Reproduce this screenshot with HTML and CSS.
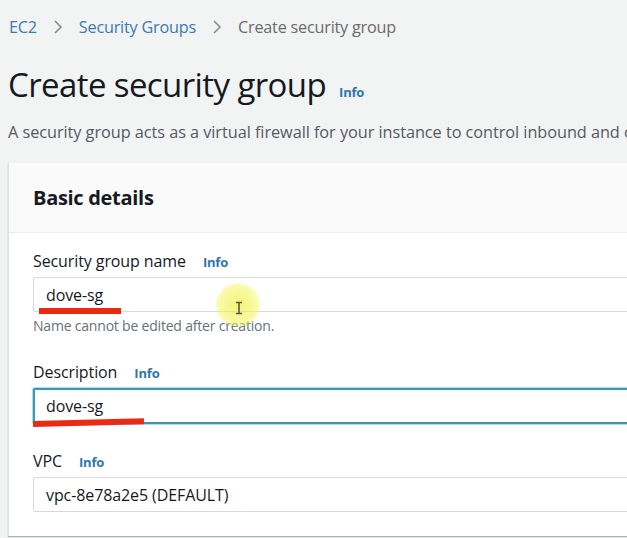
FILE: index.html
```html
<!DOCTYPE html>
<html>
<head>
<meta charset="utf-8">
<link rel="stylesheet" href="styles.css">
</head>
<body>
<div class="page">
  <nav class="crumbs">
    <a class="crumb-link">EC2</a>
    <svg class="chev" width="10" height="16" viewBox="0 0 10 16"><path d="M2 2 L8 8 L2 14" fill="none" stroke="#8c8c8c" stroke-width="1.6"/></svg>
    <a class="crumb-link">Security Groups</a>
    <svg class="chev" width="10" height="16" viewBox="0 0 10 16"><path d="M2 2 L8 8 L2 14" fill="none" stroke="#8c8c8c" stroke-width="1.6"/></svg>
    <span class="crumb-current">Create security group</span>
  </nav>
  <div class="title-row">
    <h1 class="title">Create security group</h1>
    <span class="info info-title">Info</span>
  </div>
  <p class="desc">A security group acts as a virtual firewall for your instance to control inbound and outbound traffic.</p>

  <section class="card">
    <header class="card-head">
      <h2 class="card-title">Basic details</h2>
    </header>
    <div class="card-body">
      <div class="field">
        <div class="label-row"><span class="label">Security group name</span><span class="info">Info</span></div>
        <div class="input">
          <span class="val">dove-sg</span>
          <span class="redline red1"></span>
          <span class="cursor-glow"></span>
          <svg class="ibeam" width="10" height="14" viewBox="0 0 10 14"><path d="M2 1.5 H8 M5 1.5 V12.5 M2 12.5 H8" stroke="#555" stroke-width="1.6" fill="none"/></svg>
        </div>
        <div class="hint">Name cannot be edited after creation.</div>
      </div>
      <div class="field field-desc">
        <div class="label-row"><span class="label">Description</span><span class="info">Info</span></div>
        <div class="input input-focus">
          <span class="val">dove-sg</span>
          <span class="redline red2"></span>
        </div>
      </div>
      <div class="field field-vpc">
        <div class="label-row"><span class="label">VPC</span><span class="info">Info</span></div>
        <div class="input">
          <span class="val">vpc-8e78a2e5 (DEFAULT)</span>
        </div>
      </div>
    </div>
  </section>
</div>
</body>
</html>
```

FILE: styles.css
```css
* { box-sizing: border-box; }
html, body { margin: 0; padding: 0; }
body {
  background: #f2f3f3;
  font-family: "Open Sans", "Noto Sans", sans-serif;
  color: #16191f;
  width: 627px;
  height: 538px;
  overflow: hidden;
}
.page { padding: 0 0 0 8px; }

.crumbs {
  display: flex;
  align-items: center;
  height: 54px;
  padding-left: 1px;
  font-size: 16.2px;
  letter-spacing: -0.2px;
}
.crumb-link { color: #3b7bae; }
.crumb-current { color: #6b6b6b; }
.chev { margin: 0 16px 0 16px; }

.title-row {
  display: flex;
  align-items: flex-end;
  height: 51px;
}
.title {
  margin: 0;
  font-weight: 400;
  font-size: 33px;
  letter-spacing: -0.6px;
  line-height: 40px;
  color: #16191f;
}
.info {
  color: #2f77aa;
  font-weight: 700;
  font-size: 13px;
  letter-spacing: -0.2px;
}
.info-title { margin: 0 0 4px 13px; }

.desc {
  margin: 16px 0 0 0;
  font-size: 16.3px;
  color: #545b64;
  white-space: nowrap;
  letter-spacing: -0.05px;
  line-height: 22px;
  overflow: hidden;
}

.card {
  margin-top: 20px;
  background: #fff;
  border-left: 1px solid #e0e0e0;
  box-shadow: 0 1px 1px rgba(0,28,36,.3);
  height: 373px;
}
.card-head {
  background: #fafafa;
  height: 70px;
  border-bottom: 1px solid #eaeded;
  display: flex;
  align-items: center;
  padding-left: 24px;
}
.card-title {
  margin: 0;
  font-size: 20px;
  font-weight: 700;
  letter-spacing: -0.3px;
  color: #16191f;
}
.card-body { padding: 17px 0 0 24px; }

.label-row {
  display: flex;
  align-items: baseline;
  height: 24px;
}
.label {
  font-size: 16px;
  color: #16191f;
  letter-spacing: -0.1px;
  margin-right: 17px;
}
.input {
  position: relative;
  margin-top: 3px;
  margin-right: -20px;
  height: 35px;
  border: 1px solid #d5dbdb;
  border-radius: 2px;
  background: #fff;
  display: flex;
  align-items: center;
  padding-left: 12px;
  font-size: 16px;
  letter-spacing: -0.1px;
}
.input-focus {
  height: 36px;
  border: 2px solid #3f96b0;
  box-shadow: 0 0 0 1px #a6e1f0;
  padding-left: 11px;
}
.val { color: #16191f; }
.hint {
  font-size: 14px;
  color: #687078;
  letter-spacing: -0.2px;
  margin-top: 4px;
  line-height: 20px;
}
.field-desc { margin-top: 25px; }
.field-vpc { margin-top: 26px; }

.redline {
  position: absolute;
  height: 6px;
  background: #ea2a12;
}
.red1 { left: 5px; width: 82px; top: 30px; }
.red2 { left: -2px; width: 111px; top: 31px; transform: rotate(-1.4deg); transform-origin: left center; }

.cursor-glow {
  position: absolute;
  left: 182px;
  top: 5px;
  width: 44px;
  height: 44px;
  border-radius: 50%;
  background: radial-gradient(circle, rgba(240,240,70,0.75) 0%, rgba(245,245,90,0.55) 55%, rgba(250,250,150,0) 100%);
}
.ibeam { position: absolute; left: 200px; top: 23px; }
```
